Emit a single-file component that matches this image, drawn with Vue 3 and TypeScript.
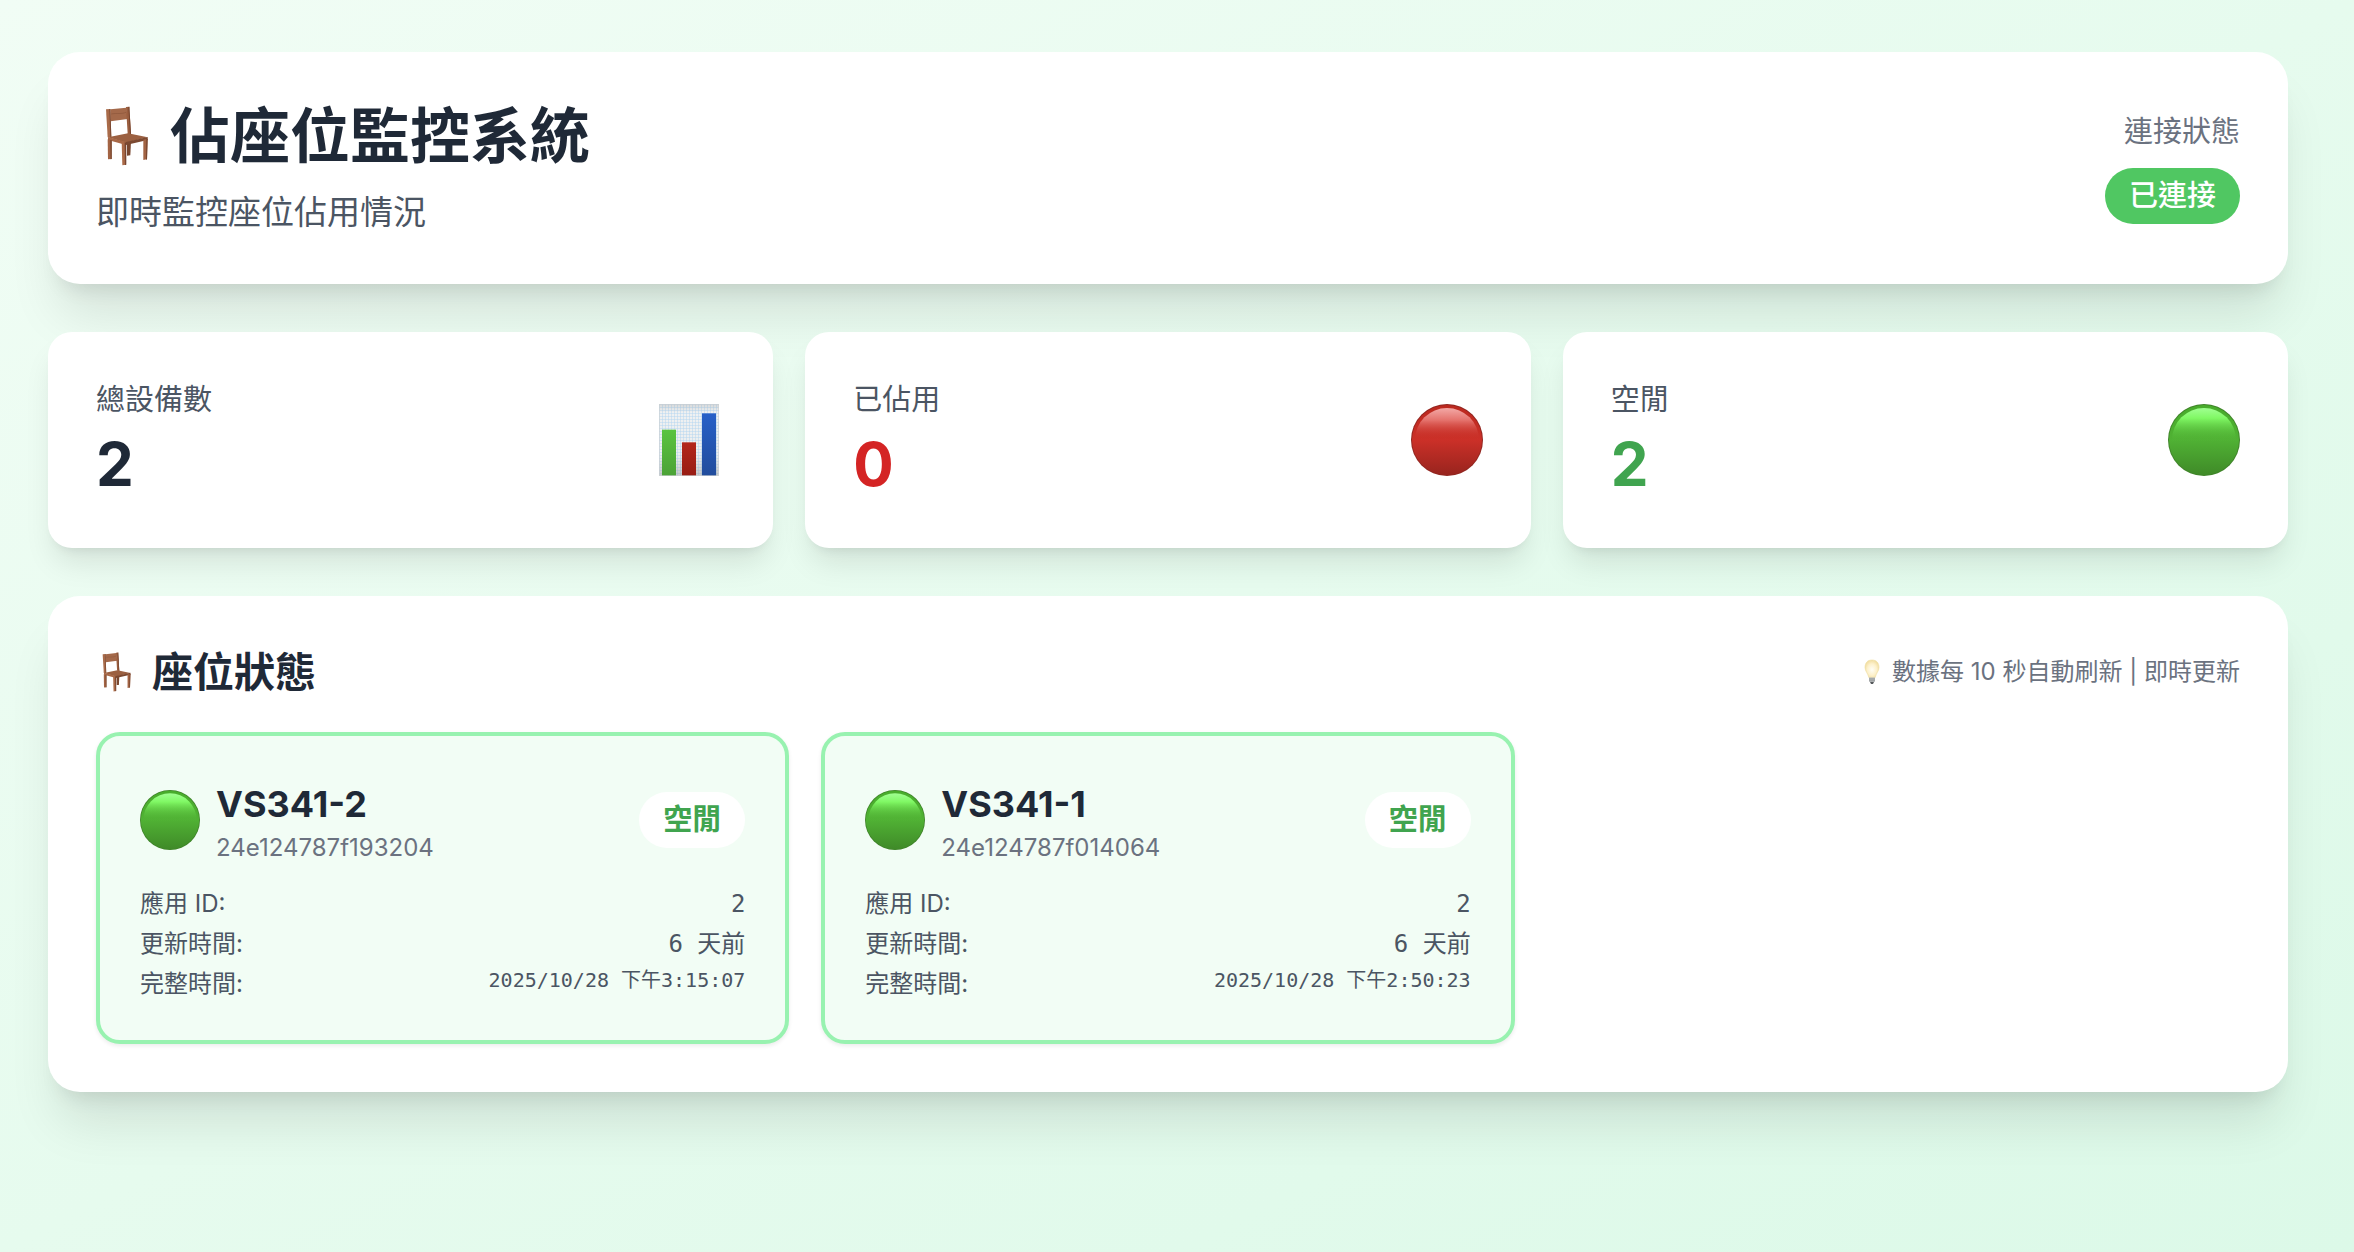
<script setup lang="ts">
interface Stat {
  label: string
  value: number
  tone: 'dark' | 'red' | 'green'
  icon: 'chart' | 'red' | 'green'
}

interface Seat {
  name: string
  eui: string
  status: string
  appId: string
  updated: string
  fullTime: string
}

const stats: Stat[] = [
  { label: '總設備數', value: 2, tone: 'dark', icon: 'chart' },
  { label: '已佔用', value: 0, tone: 'red', icon: 'red' },
  { label: '空閒', value: 2, tone: 'green', icon: 'green' },
]

const seats: Seat[] = [
  {
    name: 'VS341-2',
    eui: '24e124787f193204',
    status: '空閒',
    appId: '2',
    updated: '6 天前',
    fullTime: '2025/10/28 下午3:15:07',
  },
  {
    name: 'VS341-1',
    eui: '24e124787f014064',
    status: '空閒',
    appId: '2',
    updated: '6 天前',
    fullTime: '2025/10/28 下午2:50:23',
  },
]
</script>

<template>
  <!-- Shared gradients and symbols -->
  <svg class="defs" width="0" height="0" aria-hidden="true">
    <defs>
      <linearGradient id="green-body" x1="0" y1="0" x2="0" y2="1">
        <stop offset="0" stop-color="#48ac2b" />
        <stop offset="0.5" stop-color="#50b134" />
        <stop offset="1" stop-color="#3f8a28" />
      </linearGradient>
      <linearGradient id="green-gloss" gradientUnits="userSpaceOnUse" x1="0" y1="4" x2="0" y2="38">
        <stop offset="0" stop-color="#a0ff92" />
        <stop offset="0.3" stop-color="#80f864" />
        <stop offset="1" stop-color="#50b134" stop-opacity="0" />
      </linearGradient>
      <linearGradient id="red-body" x1="0" y1="0" x2="0" y2="1">
        <stop offset="0" stop-color="#bb281e" />
        <stop offset="0.5" stop-color="#cb3028" />
        <stop offset="1" stop-color="#98241e" />
      </linearGradient>
      <linearGradient id="red-gloss" gradientUnits="userSpaceOnUse" x1="0" y1="4" x2="0" y2="35">
        <stop offset="0" stop-color="#f3a9a6" />
        <stop offset="0.4" stop-color="#e4716b" />
        <stop offset="1" stop-color="#cb3028" stop-opacity="0" />
      </linearGradient>
      <linearGradient id="bar-green" x1="0" y1="0" x2="0" y2="1">
        <stop offset="0" stop-color="#5ac43f" /><stop offset="1" stop-color="#4ba236" />
      </linearGradient>
      <linearGradient id="bar-red" x1="0" y1="0" x2="0" y2="1">
        <stop offset="0" stop-color="#b3261b" /><stop offset="1" stop-color="#981d14" />
      </linearGradient>
      <linearGradient id="bar-blue" x1="0" y1="0" x2="0" y2="1">
        <stop offset="0" stop-color="#2760c8" /><stop offset="1" stop-color="#214c9c" />
      </linearGradient>
      <pattern id="graph-paper" width="9" height="9" patternUnits="userSpaceOnUse">
        <rect width="9" height="9" fill="#f5f5f4" />
        <path d="M0 1.5H9M1.500 0V9" stroke="#bddaf2" stroke-width="2" />
        <path d="M0 6H9M6 0V9" stroke="#e2e8ec" stroke-width="1" />
      </pattern>
      <linearGradient id="paper-shade" x1="0" y1="0" x2="0" y2="1">
        <stop offset="0" stop-color="#888" stop-opacity="0.24" />
        <stop offset="0.12" stop-color="#888" stop-opacity="0" />
        <stop offset="0.7" stop-color="#888" stop-opacity="0.03" />
        <stop offset="1" stop-color="#777" stop-opacity="0.35" />
      </linearGradient>
      <radialGradient id="bulb-glow" cx="0.5" cy="0.55" r="0.55">
        <stop offset="0" stop-color="#fffef6" />
        <stop offset="0.6" stop-color="#fdf1cc" />
        <stop offset="1" stop-color="#f1dda0" />
      </radialGradient>
      <symbol id="chair" viewBox="18 30 180 180">
        <path d="M111 138L123 136L121 178L111 179Z" fill="#79472f" />
        <path d="M61 40L109 35L113 69L62 76Z" fill="#a4694a" />
        <path d="M64 54C80 50 94 56 110 48" fill="none" stroke="#8c563b" stroke-width="2" />
        <path d="M108 33L118 32L123 115L113 114Z" fill="#9a5d3e" />
        <path d="M115 33L118 32L123 115L120 115Z" fill="#75432d" />
        <path d="M48 40L61 39L64 124L53 124Z" fill="#a96b49" />
        <path d="M58 39L61 39L64 124L61 124Z" fill="#7a4831" />
        <path d="M54 124L114 112L173 124L108 140Z" fill="#9b6041" />
        <path d="M54 123L108 138V147L54 132Z" fill="#a86847" />
        <path d="M108 138L173 123V132L108 147Z" fill="#7c4931" />
        <path d="M53 130L65 133V189L54 190Z" fill="#a36444" />
        <path d="M61 132L65 133V189L62 190Z" fill="#75442e" />
        <path d="M95 137L108 140V206L97 208Z" fill="#aa6a48" />
        <path d="M104 139L109 140V206L105 207Z" fill="#774530" />
        <path d="M160 131L173 128L171 190L160 192Z" fill="#a26343" />
        <path d="M169 129L173 128L171 190L168 191Z" fill="#75442e" />
      </symbol>
      <symbol id="green-ball" viewBox="0 0 72 72">
        <circle cx="36" cy="36" r="36" fill="#3f8429" />
        <circle cx="36" cy="36" r="35" fill="url(#green-body)" />
        <ellipse cx="36" cy="36" rx="32" ry="32" fill="url(#green-gloss)" />
      </symbol>
      <symbol id="red-ball" viewBox="0 0 72 72">
        <circle cx="36" cy="36" r="36" fill="#92251f" />
        <circle cx="36" cy="36" r="35" fill="url(#red-body)" />
        <ellipse cx="36" cy="36" rx="32" ry="32" fill="url(#red-gloss)" />
      </symbol>
      <symbol id="chart" viewBox="0 0 216 216">
        <rect x="18" width="180" height="216" fill="url(#graph-paper)" />
        <rect x="18" width="180" height="216" fill="url(#paper-shade)" />
        <rect x="19" y="1" width="178" height="214" fill="none" stroke="#ced2d5" stroke-width="2" />
        <rect x="27" y="77" width="42" height="137" fill="url(#bar-green)" />
        <rect x="87" y="115" width="42" height="99" fill="url(#bar-red)" />
        <rect x="147" y="28" width="42" height="186" fill="url(#bar-blue)" />
      </symbol>
      <symbol id="bulb" viewBox="0 0 28 28">
        <path d="M14 2C9 2 7 5.500 7 9.500C7 13 10 15.500 10.800 19.500H17.200C18 15.500 21 13 21 9.500C21 5.500 19 2 14 2Z" fill="url(#bulb-glow)" stroke="#efdda0" stroke-width="0.600" />
        <path d="M11 19.500H17V23.500Q14 25 11 23.500Z" fill="#b5b8ba" />
        <path d="M11 21H17M11 22.800H17" stroke="#85898c" stroke-width="0.600" />
        <path d="M12 24H16L15 26H13Z" fill="#55585b" />
      </symbol>
    </defs>
  </svg>

  <main class="page">
    <header class="card header">
      <div>
        <h1 class="title">
          <svg class="title-icon" aria-hidden="true"><use href="#chair" /></svg>
          佔座位監控系統
        </h1>
        <p class="subtitle">即時監控座位佔用情況</p>
      </div>
      <div class="connection">
        <span class="connection-label">連接狀態</span>
        <span class="pill pill-online">已連接</span>
      </div>
    </header>

    <section class="stats">
      <article v-for="stat in stats" :key="stat.label" class="stat">
        <div>
          <p class="stat-label">{{ stat.label }}</p>
          <p class="stat-value" :class="stat.tone">{{ stat.value }}</p>
        </div>
        <svg class="stat-icon" aria-hidden="true">
          <use v-if="stat.icon === 'chart'" href="#chart" />
          <use v-else-if="stat.icon === 'red'" href="#red-ball" />
          <use v-else href="#green-ball" />
        </svg>
      </article>
    </section>

    <section class="card">
      <div class="section-head">
        <h2 class="section-title">
          <svg class="section-icon" aria-hidden="true"><use href="#chair" /></svg>
          座位狀態
        </h2>
        <p class="hint">
          <svg class="hint-icon" aria-hidden="true"><use href="#bulb" /></svg>
          數據每 10 秒自動刷新 | 即時更新
        </p>
      </div>

      <div class="seats">
        <article v-for="seat in seats" :key="seat.eui" class="seat">
          <div class="seat-head">
            <svg class="seat-icon" aria-hidden="true"><use href="#green-ball" /></svg>
            <div class="seat-id">
              <h3 class="seat-name">{{ seat.name }}</h3>
              <p class="seat-eui">{{ seat.eui }}</p>
            </div>
            <span class="pill pill-free">{{ seat.status }}</span>
          </div>
          <dl class="details">
            <div class="row">
              <dt>應用 ID:</dt>
              <dd>{{ seat.appId }}</dd>
            </div>
            <div class="row">
              <dt>更新時間:</dt>
              <dd>{{ seat.updated }}</dd>
            </div>
            <div class="row">
              <dt>完整時間:</dt>
              <dd class="small">{{ seat.fullTime }}</dd>
            </div>
          </dl>
        </article>
      </div>
    </section>
  </main>
</template>

<style>
body {
  margin: 0;
}
</style>

<style scoped>
.defs {
  position: absolute;
}

.page {
  box-sizing: border-box;
  min-height: 100vh;
  padding: 52px 66px 48px 48px;
  display: flex;
  flex-direction: column;
  gap: 48px;
  background: linear-gradient(to bottom right, #f1fdf5, #e6fbee 50%, #dcf9e8);
  color: #1f2937;
  font-family: Inter, "Noto Sans CJK TC", sans-serif;
}

h1,
h2,
h3,
p,
dl,
dd {
  margin: 0;
}

.card {
  padding: 48px;
  border-radius: 32px;
  background: #fff;
  box-shadow: 0 40px 50px -10px rgba(0, 0, 0, 0.1), 0 16px 20px -12px rgba(0, 0, 0, 0.1);
}

.header {
  display: flex;
  align-items: center;
  justify-content: space-between;
}

.title {
  display: flex;
  align-items: center;
  gap: 14px;
  font-size: 60px;
  line-height: 72px;
  font-weight: 700;
}

.title-icon {
  width: 60px;
  height: 60px;
}

.subtitle {
  margin-top: 16px;
  color: #4b5563;
  font-size: 33px;
  line-height: 48px;
}

.connection {
  display: flex;
  flex-direction: column;
  align-items: flex-end;
  gap: 16px;
}

.connection-label {
  color: #6b7280;
  font-size: 29px;
  line-height: 40px;
}

.pill {
  padding: 8px 24px;
  border-radius: 28px;
  font-size: 29px;
  line-height: 40px;
}

.pill-online {
  background: #50c762;
  color: #fff;
  font-weight: 500;
}

.pill-free {
  background: #fff;
  color: #40a44f;
  font-weight: 700;
}

.stats,
.seats {
  display: grid;
  grid-template-columns: repeat(3, 1fr);
  gap: 32px;
}

.stat {
  display: flex;
  align-items: center;
  justify-content: space-between;
  padding: 48px;
  border-radius: 24px;
  background: #fff;
  box-shadow: 0 20px 30px -6px rgba(0, 0, 0, 0.1), 0 8px 12px -8px rgba(0, 0, 0, 0.1);
}

.stat-label {
  color: #4b5563;
  font-size: 29px;
  line-height: 40px;
}

.stat-value {
  margin-top: 8px;
  font-size: 60px;
  line-height: 72px;
  font-weight: 700;
}

.dark {
  color: #1f2937;
}

.red {
  color: #d42424;
}

.green {
  color: #40a44f;
}

.stat-icon {
  width: 72px;
  height: 72px;
}

.section-head {
  display: flex;
  align-items: center;
  justify-content: space-between;
  margin-bottom: 32px;
}

.section-title {
  display: flex;
  align-items: center;
  gap: 16px;
  font-size: 41px;
  line-height: 56px;
  font-weight: 700;
}

.section-icon {
  width: 40px;
  height: 40px;
}

.hint {
  display: flex;
  align-items: center;
  gap: 6px;
  color: #6b7280;
  font-size: 24px;
  line-height: 32px;
}

.hint-icon {
  width: 28px;
  height: 28px;
}

.seat {
  padding: 40px;
  border: 4px solid #98f2b0;
  border-radius: 24px;
  background: #f2fdf5;
  box-shadow: 0 2px 4px rgba(0, 0, 0, 0.08);
}

.seat-head {
  display: flex;
  align-items: center;
  gap: 16px;
  margin-bottom: 24px;
}

.seat-icon {
  width: 60px;
  height: 60px;
}

.seat-id {
  flex: 1;
}

.seat-name {
  font-size: 36px;
  line-height: 56px;
  font-weight: 700;
}

.seat-eui {
  color: #6b7280;
  font-size: 24px;
  line-height: 32px;
}

.details {
  display: flex;
  flex-direction: column;
  gap: 8px;
  color: #4b5563;
  font-size: 24px;
  line-height: 32px;
}

.row {
  display: flex;
  align-items: flex-start;
  justify-content: space-between;
}

.row dd {
  font-family: "DejaVu Sans Mono", "Noto Sans CJK TC", monospace;
}

.row .small {
  font-size: 20px;
  line-height: 24px;
}
</style>
